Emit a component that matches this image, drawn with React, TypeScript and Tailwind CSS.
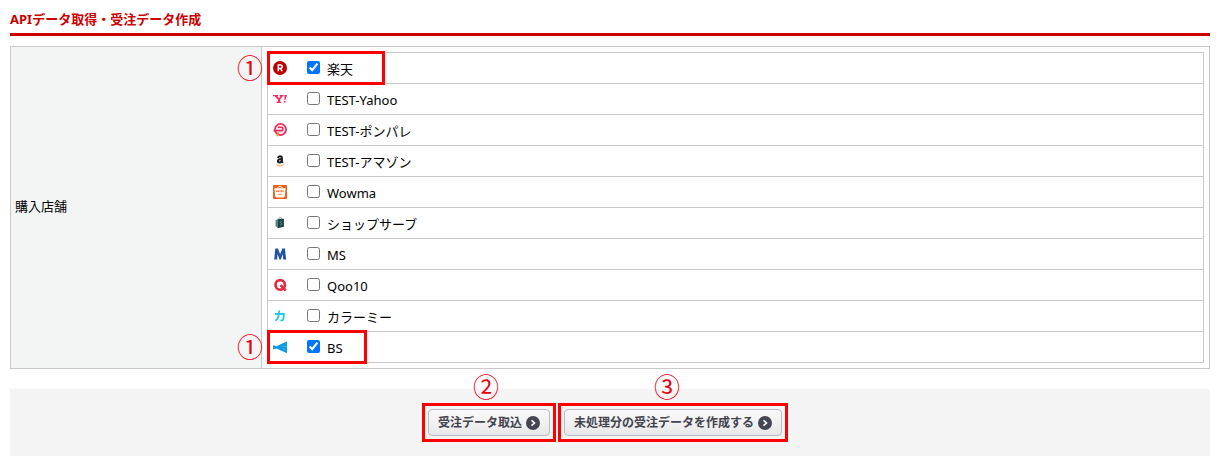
import { useState } from 'react';
import type { ReactNode } from 'react';
import clsx from 'clsx';

interface Shop {
  id: string;
  name: string;
  icon: ReactNode;
  // width of the red frame drawn round the row
  frame?: string;
  mark?: string;
}

const svg = 'block h-[14px] w-[14px]';

const shops: Shop[] = [
  {
    id: 'rakuten',
    name: '楽天',
    frame: 'w-[118px]',
    mark: '①',
    icon: (
      <svg viewBox="0 0 14 14" className={svg}>
        <circle cx="7" cy="7" r="7" fill="#bf0000" />
        <path d="M5.3 10.3V3.9h2.2a1.7 1.7 0 0 1 0 3.5H5.3M7.2 7.4l2.1 2.9" fill="none" stroke="#fff" strokeWidth="1.5" />
      </svg>
    ),
  },
  {
    id: 'yahoo',
    name: 'TEST-Yahoo',
    icon: (
      <svg viewBox="0 0 14 14" className={svg}>
        <path
          d="M0 3h5v1.200h-.6L6 6.300 7.400 4.200H6.600V3h3.900v1.200h-.8L7.100 7.500v2.200H8.300V11H3.600V9.700h1.200V7.500L1.700 4.200H0zM11.500 3H14l-1.500 4.800h-1.200zM10.900 8.900h1.700v1.700h-1.700z"
          fill="#fa2c5c"
        />
      </svg>
    ),
  },
  {
    id: 'ponpare',
    name: 'TEST-ポンパレ',
    icon: (
      <svg viewBox="0 0 14 14" className={svg}>
        <circle cx="7.500" cy="6.500" r="5.600" fill="#fde3ea" stroke="#ea2f5c" strokeWidth="1.700" />
        <path d="M5 4.200h3.200a1.700 1.700 0 0 1 0 3.400H.5" fill="none" stroke="#ea2f5c" strokeWidth="1.600" />
        <path d="M5.600 9.300 4.300 13.200" stroke="#f39a2c" strokeWidth="1.700" />
      </svg>
    ),
  },
  {
    id: 'amazon',
    name: 'TEST-アマゾン',
    icon: (
      <svg viewBox="0 0 14 14" className={svg}>
        <path
          d="M4.900 4c.2-1.200 1-1.700 2.100-1.700 1.300 0 1.900.6 1.900 1.800v3.600l.9 1.100M8.900 5.100c-2.400 0-4 .4-4 2 0 1 .6 1.500 1.500 1.500C7.800 8.600 8.900 7.600 8.900 5.800"
          fill="none"
          stroke="#1c1c1c"
          strokeWidth="2"
        />
        <path d="M3 10.400c2.400 1.800 5.600 1.800 8 .2" fill="none" stroke="#f9b870" strokeWidth="1.200" />
      </svg>
    ),
  },
  {
    id: 'wowma',
    name: 'Wowma',
    icon: (
      <svg viewBox="0 0 14 14" className={svg}>
        <rect width="14" height="14" rx="1" fill="#f0601c" />
        <path d="M4.500 3.500C4.500 1 9.500 1 9.500 3.500" fill="none" stroke="#fff" strokeWidth="1" />
        <path d="M1.400 3.300h11.200l-.7 7.500q-.2 1.700-1.900 1.700H4q-1.700 0-1.900-1.700z" fill="#fff" />
        <path d="m3 5.200.7 1.800.8-1.500.7 1.500.6-1.800M8.600 7.200V5.400l.8 1 .8-1v1.800M4.500 9.300h5" fill="none" stroke="#f0601c" strokeWidth=".7" />
        <circle cx="7.200" cy="6.200" r=".7" fill="none" stroke="#f0601c" strokeWidth=".6" />
      </svg>
    ),
  },
  {
    id: 'shopserve',
    name: 'ショップサーブ',
    icon: (
      <svg viewBox="0 0 14 14" className={svg}>
        <path d="m2.500 4.200 2-1v8.300l-2-1.200z" fill="#5f8285" />
        <path d="m4.500 3.200 6.400-.4v8l-6.400 1.400z" fill="#174247" />
        <path d="M5.500 3.600c.2-2.400 3.300-2.700 3.500-.3" fill="none" stroke="#456b70" strokeWidth=".8" />
        <path d="M8.700 5.400c-2.200-.3-2.200 1.500-.8 1.700 1.500.2 1.300 2-.9 1.800" fill="none" stroke="#719397" strokeWidth=".8" />
      </svg>
    ),
  },
  {
    id: 'ms',
    name: 'MS',
    icon: (
      <svg viewBox="0 0 14 14" className={svg}>
        <path d="M1.200 12.500 2.300 1.500h2.700L7.100 7.300l2.200-5.800H12l1.100 11h-2.900l-.5-5.600-1.800 5.600H6.400L4.600 6.900l-.5 5.600z" fill="#2152a3" />
      </svg>
    ),
  },
  {
    id: 'qoo10',
    name: 'Qoo10',
    icon: (
      <svg viewBox="0 0 14 14" className={svg}>
        <circle cx="7.200" cy="6.900" r="4.700" fill="none" stroke="#e5293e" strokeWidth="2.700" />
        <path d="m7.500 7.200 5.200 5.300" stroke="#e5293e" strokeWidth="2.600" />
      </svg>
    ),
  },
  {
    id: 'colorme',
    name: 'カラーミー',
    icon: (
      <svg viewBox="0 0 14 14" className={svg}>
        <path d="M2 5h8.800c0 3-.2 4.700-.8 5.900-.4.800-1.500.7-2.500.3M6.200 1.500c0 5-.7 8-3.700 10.300" fill="none" stroke="#1fcbe8" strokeWidth="1.800" />
      </svg>
    ),
  },
  {
    id: 'bs',
    name: 'BS',
    frame: 'w-[100px]',
    mark: '①',
    icon: (
      <svg viewBox="0 0 14 14" className={svg}>
        <path d="M0 5.300 3.500 6.200 14 1.200v12L3.500 8.400 0 9.200z" fill="#0e9be3" />
        <circle cx="10" cy="6.300" r=".5" fill="#8bd4f5" />
        <circle cx="12.300" cy="6.300" r=".5" fill="#8bd4f5" />
        <path d="M10.200 8.600q1 .7 2 0" fill="none" stroke="#8bd4f5" strokeWidth=".6" />
      </svg>
    ),
  },
];

function Mark({ children, className }: { children: ReactNode; className: string }) {
  return (
    <span className={clsx('pointer-events-none absolute text-[26px] leading-[26px] font-normal text-[#e60012]', className)}>
      {children}
    </span>
  );
}

function ActionButton({ label, mark, markClass }: { label: string; mark: string; markClass: string }) {
  return (
    <div className="relative">
      <button
        type="button"
        className="flex h-[27px] items-center gap-1 rounded border border-[#b9bac4] bg-linear-to-b from-[#fafafa] to-[#e8e8e8] px-[9px] text-xs font-bold text-[#43434f]"
      >
        {label}
        <svg viewBox="0 0 14 14" className={svg}>
          <circle cx="7" cy="7" r="7" fill="#464653" />
          <path d="m5.500 4.300 3 2.700-3 2.700" fill="none" stroke="#fff" strokeWidth="1.600" />
        </svg>
      </button>
      <span className="pointer-events-none absolute -inset-[6px] border-3 border-[#ff0000]" />
      <Mark className={clsx('-top-[35px]', markClass)}>{mark}</Mark>
    </div>
  );
}

export default function App() {
  const [checked, setChecked] = useState<string[]>(['rakuten', 'bs']);

  const toggle = (id: string) => {
    setChecked((c) => (c.includes(id) ? c.filter((x) => x !== id) : [...c, id]));
  };

  return (
    <main className="bg-white pt-[9px] pr-[9px] pb-[14px] pl-[10px] font-['Noto_Sans','Noto_Sans_CJK_JP',sans-serif] text-[13px] leading-5 text-black">
      <h1 className="border-b-3 border-[#cc0000] pb-1 font-bold text-[#cc0000]">APIデータ取得・受注データ作成</h1>

      <form onSubmit={(e) => e.preventDefault()}>
        <table className="mt-[10px] w-full border-separate border-spacing-0 border border-[#c8c8c8]">
          <tbody>
            <tr>
              <th scope="row" className="w-[251px] border-r border-[#c8c8c8] bg-[#f3f5f4] px-1 pb-1 text-left font-normal">
                購入店舗
              </th>
              <td className="p-[5px]">
                <table className="w-full border-separate border-spacing-0 border border-b-0 border-[#c8c8c8]">
                  <tbody>
                    {shops.map((shop) => (
                      <tr key={shop.id}>
                        <td className="border-b border-[#c8c8c8] p-0">
                          <div className="relative flex h-[30px] items-center pl-[5px]">
                            {shop.icon}
                            <label className="ml-5 flex items-center gap-[7px]">
                              <input
                                type="checkbox"
                                className="mb-[2px] h-[13px] w-[13px]"
                                checked={checked.includes(shop.id)}
                                onChange={() => toggle(shop.id)}
                              />
                              <span className="pt-[2px]">{shop.name}</span>
                            </label>
                            {shop.frame && (
                              <span className={clsx('pointer-events-none absolute -inset-y-[2px] -left-px border-3 border-[#ff0000]', shop.frame)} />
                            )}
                            {shop.mark && <Mark className="top-[2px] -left-[31px]">{shop.mark}</Mark>}
                          </div>
                        </td>
                      </tr>
                    ))}
                  </tbody>
                </table>
              </td>
            </tr>
          </tbody>
        </table>

        <div className="mt-5 flex justify-center gap-[14px] bg-[#f4f4f4] py-5 pr-[10px]">
          <ActionButton label="受注データ取込" mark="②" markClass="left-[45px]" />
          <ActionButton label="未処理分の受注データを作成する" mark="③" markClass="left-[90px]" />
        </div>
      </form>
    </main>
  );
}
